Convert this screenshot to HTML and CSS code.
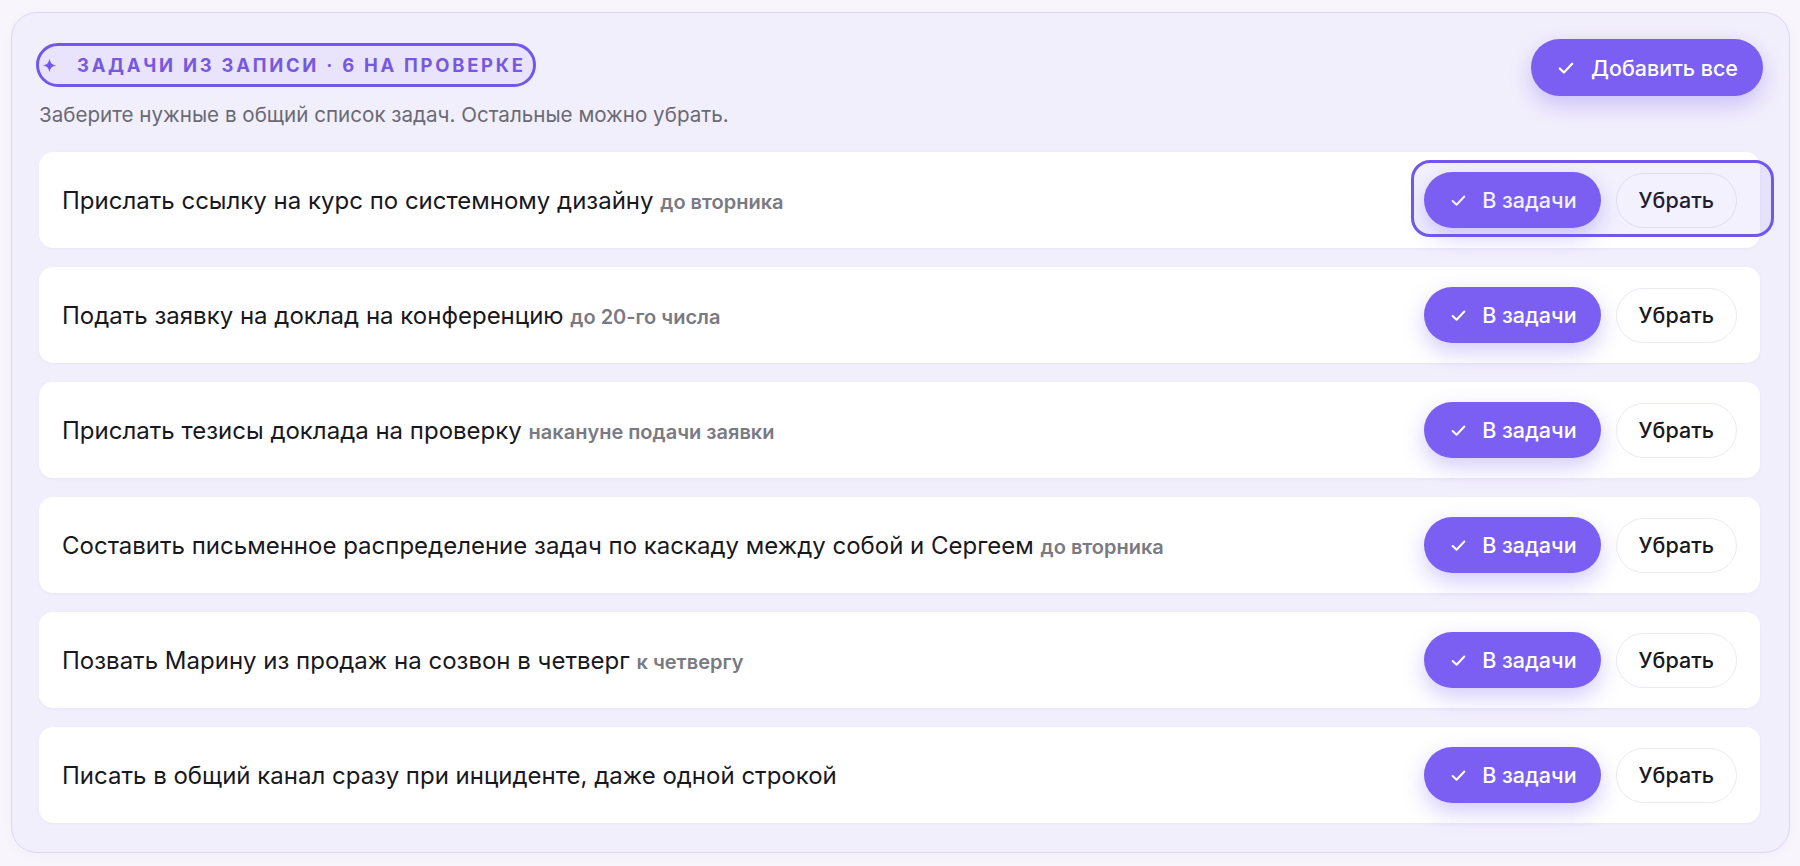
FILE: index.html
```html
<!DOCTYPE html>
<html lang="ru">
<head>
<meta charset="utf-8">
<title>Задачи из записи</title>
<link rel="stylesheet" href="styles.css">
</head>
<body>
<div class="page">
  <section class="card">
    <header class="card-head">
      <div class="head-left">
        <div class="badge">
          <svg class="sparkle" viewBox="0 0 14 14" width="15" height="15"><path d="M7 0.5 C7.6 4.6 9.4 6.4 13.5 7 C9.4 7.6 7.6 9.4 7 13.5 C6.4 9.4 4.6 7.6 0.5 7 C4.6 6.4 6.4 4.6 7 0.5 Z" fill="#7257ea"/></svg>
          <span class="badge-text">Задачи из записи · 6 на проверке</span>
        </div>
        <p class="subtitle">Заберите нужные в общий список задач. Остальные можно убрать.</p>
      </div>
      <button class="btn btn-primary btn-all">
        <svg class="check" viewBox="0 0 16 16" width="18" height="18"><path d="M2.5 8.5 L6.2 12 L13.5 4.2" fill="none" stroke="#fff" stroke-width="2" stroke-linecap="round" stroke-linejoin="round"/></svg>
        <span>Добавить все</span>
      </button>
    </header>

    <ul class="rows">
      <li class="row">
        <p class="task">Прислать ссылку на курс по системному дизайну <span class="due">до вторника</span></p>
        <div class="actions">
          <button class="btn btn-primary"><svg class="check" viewBox="0 0 16 16" width="17" height="17"><path d="M2.5 8.5 L6.2 12 L13.5 4.2" fill="none" stroke="#fff" stroke-width="1.9" stroke-linecap="round" stroke-linejoin="round"/></svg><span>В задачи</span></button>
          <button class="btn btn-ghost">Убрать</button>
          <div class="focus-ring"></div>
        </div>
      </li>
      <li class="row">
        <p class="task">Подать заявку на доклад на конференцию <span class="due">до 20-го числа</span></p>
        <div class="actions">
          <button class="btn btn-primary"><svg class="check" viewBox="0 0 16 16" width="17" height="17"><path d="M2.5 8.5 L6.2 12 L13.5 4.2" fill="none" stroke="#fff" stroke-width="1.9" stroke-linecap="round" stroke-linejoin="round"/></svg><span>В задачи</span></button>
          <button class="btn btn-ghost">Убрать</button>
        </div>
      </li>
      <li class="row">
        <p class="task">Прислать тезисы доклада на проверку <span class="due">накануне подачи заявки</span></p>
        <div class="actions">
          <button class="btn btn-primary"><svg class="check" viewBox="0 0 16 16" width="17" height="17"><path d="M2.5 8.5 L6.2 12 L13.5 4.2" fill="none" stroke="#fff" stroke-width="1.9" stroke-linecap="round" stroke-linejoin="round"/></svg><span>В задачи</span></button>
          <button class="btn btn-ghost">Убрать</button>
        </div>
      </li>
      <li class="row">
        <p class="task">Составить письменное распределение задач по каскаду между собой и Сергеем <span class="due">до вторника</span></p>
        <div class="actions">
          <button class="btn btn-primary"><svg class="check" viewBox="0 0 16 16" width="17" height="17"><path d="M2.5 8.5 L6.2 12 L13.5 4.2" fill="none" stroke="#fff" stroke-width="1.9" stroke-linecap="round" stroke-linejoin="round"/></svg><span>В задачи</span></button>
          <button class="btn btn-ghost">Убрать</button>
        </div>
      </li>
      <li class="row">
        <p class="task">Позвать Марину из продаж на созвон в четверг <span class="due">к четвергу</span></p>
        <div class="actions">
          <button class="btn btn-primary"><svg class="check" viewBox="0 0 16 16" width="17" height="17"><path d="M2.5 8.5 L6.2 12 L13.5 4.2" fill="none" stroke="#fff" stroke-width="1.9" stroke-linecap="round" stroke-linejoin="round"/></svg><span>В задачи</span></button>
          <button class="btn btn-ghost">Убрать</button>
        </div>
      </li>
      <li class="row">
        <p class="task">Писать в общий канал сразу при инциденте, даже одной строкой</p>
        <div class="actions">
          <button class="btn btn-primary"><svg class="check" viewBox="0 0 16 16" width="17" height="17"><path d="M2.5 8.5 L6.2 12 L13.5 4.2" fill="none" stroke="#fff" stroke-width="1.9" stroke-linecap="round" stroke-linejoin="round"/></svg><span>В задачи</span></button>
          <button class="btn btn-ghost">Убрать</button>
        </div>
      </li>
    </ul>
  </section>
</div>
</body>
</html>
```

FILE: styles.css
```css
* { box-sizing: border-box; }

html, body {
  margin: 0;
  padding: 0;
}

body {
  background: #f8f5fc;
  font-family: "Inter", "Noto Sans", "Liberation Sans", sans-serif;
  color: #18181d;
}

.page {
  padding: 12px 10px 13px 11px;
}

.card {
  height: 841px;
  background: #f2effc;
  border: 1px solid #ddd7f4;
  border-radius: 26px;
  padding: 26px 29px 28px 27px;
  box-shadow: 0 2px 10px rgba(110, 90, 200, 0.05);
}

.card-head {
  display: flex;
  justify-content: space-between;
  align-items: flex-start;
  margin-right: -3px;
}

.head-left {
  display: flex;
  flex-direction: column;
  align-items: flex-start;
}

.badge {
  margin-top: 7px;
  display: inline-flex;
  align-items: center;
  height: 38px;
  padding: 0 7px 0 3px;
  border-radius: 999px;
  background: #e9e3fb;
  outline: 3px solid #7157ea;
}

.sparkle {
  width: 15px;
  height: 15px;
  margin-right: 20px;
  flex: none;
}

.badge-text {
  font-size: 18.4px;
  font-weight: 700;
  letter-spacing: 0.15em;
  text-transform: uppercase;
  color: #7659df;
  white-space: nowrap;
}

.subtitle {
  margin: 19px 0 0 0;
  font-size: 20.6px;
  line-height: 24px;
  color: #6a6a74;
}

.btn {
  display: inline-flex;
  align-items: center;
  justify-content: center;
  border-radius: 999px;
  font-family: inherit;
  font-size: 21.5px;
  font-weight: 500;
  cursor: pointer;
  white-space: nowrap;
}

.btn-primary {
  height: 56px;
  padding: 0 24px 0 26px;
  background: #7a5ff2;
  color: #fff;
  border: none;
  box-shadow: 0 9px 22px rgba(122, 95, 242, 0.32);
}

.btn-primary .check {
  margin-right: 15px;
  flex: none;
}

.btn-all {
  height: 57px;
  padding: 0 25px 0 26px;
}

.btn-all .check {
  margin-right: 16px;
}

.btn-ghost {
  height: 55px;
  padding: 0 22px;
  background: #fff;
  color: #18181d;
  border: 1.5px solid #ebe9f1;
}

.rows {
  list-style: none;
  margin: 25px 0 0 0;
  padding: 0;
  display: flex;
  flex-direction: column;
  gap: 19px;
}

.row {
  display: flex;
  align-items: center;
  justify-content: space-between;
  height: 96px;
  padding: 0 23px 0 23px;
  background: #fff;
  border-radius: 14px;
  box-shadow: 0 1px 3px rgba(90, 70, 170, 0.06);
}

.task {
  margin: 0;
  font-size: 24px;
  color: #18181d;
  white-space: nowrap;
}

.due {
  font-size: 20px;
  font-weight: 600;
  color: #7a7a82;
}

.actions {
  position: relative;
  display: flex;
  align-items: center;
  gap: 15px;
}

.focus-ring {
  position: absolute;
  left: -13px;
  right: -37px;
  top: -12px;
  bottom: -9px;
  border: 3px solid #7157ea;
  border-radius: 19px;
  background: rgba(122, 95, 242, 0.09);
  pointer-events: none;
}
```
